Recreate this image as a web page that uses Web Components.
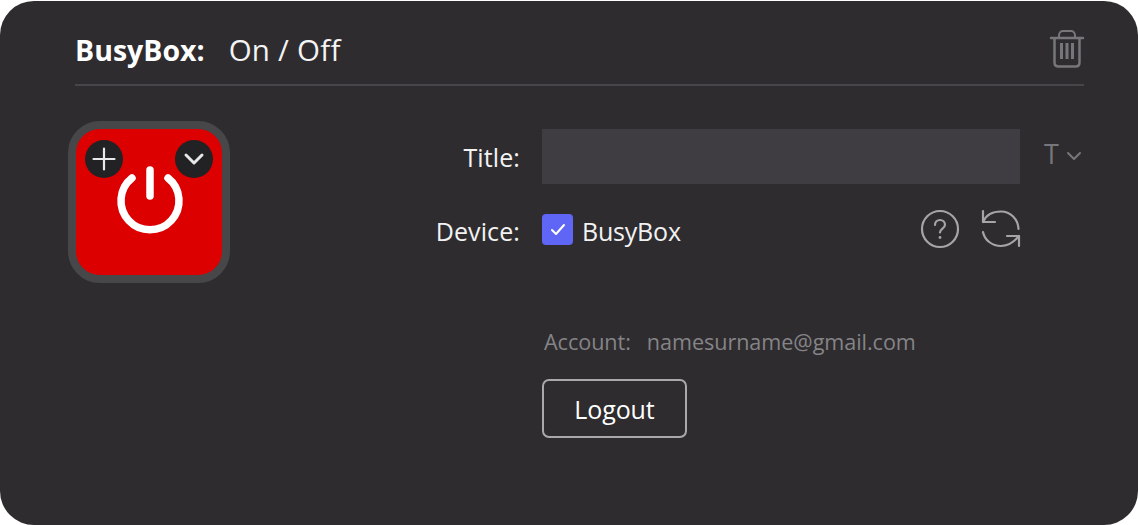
<!DOCTYPE html>
<html lang="en">
<head>
<meta charset="utf-8">
<title>BusyBox: On / Off</title>
<style>
  html, body { margin: 0; height: 100%; background: #fff; }
  body { font-family: "Open Sans", "Noto Sans", "Liberation Sans", sans-serif; color: #fff; overflow: hidden; }
</style>
</head>
<body>
<action-panel>
  <panel-header name="BusyBox:" action="On / Off"></panel-header>
  <div style="display:flex">
    <action-key></action-key>
    <settings-form></settings-form>
  </div>
</action-panel>

<script>
// Outer rounded panel
class ActionPanel extends HTMLElement {
  constructor() {
    super();
    this.attachShadow({ mode: 'open' });
    this.shadowRoot.innerHTML = `
      <style>
        :host {
          display: block;
          box-sizing: border-box;
          height: 524px;
          margin-top: 1px;
          padding: 0 54px 0 75px;
          background: #2e2c2f;
          border-radius: 34px;
        }
      </style>
      <slot></slot>
    `;
  }
}

// Title row with trash icon
class PanelHeader extends HTMLElement {
  constructor() {
    super();
    this.attachShadow({ mode: 'open' });
  }

  connectedCallback() {
    const name = this.getAttribute('name') || '';
    const action = this.getAttribute('action') || '';
    this.shadowRoot.innerHTML = `
      <style>
        :host {
          display: flex;
          align-items: center;
          height: 69px;
          padding-top: 14px;
          border-bottom: 2px solid #47454a;
        }
        b { font-size: 28.500px; font-weight: 700; margin-right: 24px; }
        span { font-size: 29.500px; letter-spacing: 0.25px; color: #f4f4f4; flex: 1; }
        svg { margin: -2px -1px 0 0; }
      </style>
      <b>${name}</b>
      <span>${action}</span>
      <svg width="36" height="38" viewBox="0 0 36 38" fill="none" stroke="#77767a" stroke-width="2" stroke-linecap="round" stroke-linejoin="round">
        <path d="M2 8h32" stroke-width="2.500"/>
        <path d="M10 8V5.500C10 2.500 12 1 14 1h8c2 0 4 1.500 4 4.500V8"/>
        <path d="M5.500 8.500v24c0 2.500 1.500 4 4 4h17c2.500 0 4-1.500 4-4v-24" stroke-width="2.500"/>
        <path d="M12.500 13v16M18 13v16M23.500 13v16" stroke-width="3" stroke-linecap="butt"/>
      </svg>
    `;
  }
}

// Red power key preview with its two round badges
class ActionKey extends HTMLElement {
  constructor() {
    super();
    this.attachShadow({ mode: 'open' });
    this.shadowRoot.innerHTML = `
      <style>
        :host {
          display: block;
          position: relative;
          flex: none;
          box-sizing: border-box;
          width: 162px;
          height: 162px;
          margin: 35px 0 0 -7px;
          background: #dc0000;
          border: 8px solid #474649;
          border-radius: 32px;
        }
        .badge {
          position: absolute;
          top: 11px;
          width: 38px;
          height: 38px;
          border-radius: 50%;
          background: #222124;
        }
        .plus { left: 9px; }
        .down { right: 9px; }
        .power { position: absolute; left: 38px; top: 34px; }
      </style>
      <svg class="power" width="72" height="72" viewBox="0 0 72 72" fill="none" stroke="#fff" stroke-width="7.500" stroke-linecap="round">
        <path d="M18 15a29 29 0 1 0 36 0"/>
        <path d="M36 7v26"/>
      </svg>
      <svg class="badge plus" viewBox="0 0 38 38" fill="none" stroke="#e8e8e8" stroke-width="2.200" stroke-linecap="round">
        <path d="M19 8.500v21M8.500 19h21"/>
      </svg>
      <svg class="badge down" viewBox="0 0 38 38" fill="none" stroke="#e8e8e8" stroke-width="3" stroke-linecap="round" stroke-linejoin="round">
        <path d="M11 15l8 8 8-8"/>
      </svg>
    `;
  }
}

// Title / device / account form
class SettingsForm extends HTMLElement {
  constructor() {
    super();
    this.attachShadow({ mode: 'open' });
    this.shadowRoot.innerHTML = `
      <style>
        :host {
          display: grid;
          flex: 1;
          grid-template-columns: 290px 478px 1fr;
          column-gap: 22px;
          align-content: start;
          margin-top: 43px;
          font-size: 25px;
          letter-spacing: 0.1px;
          color: #f2f2f2;
        }
        .label { text-align: right; align-self: center; }
        .field { height: 55px; background: #3f3d41; }
        .font {
          display: flex;
          align-items: center;
          gap: 7px;
          height: 49px;
          margin-left: 2px;
          color: #77767a;
          font-size: 27px;
        }
        .font svg { margin-top: 5px; }
        .device {
          display: flex;
          align-items: center;
          height: 38px;
          margin-top: 26px;
        }
        .device-label { padding-top: 3px; box-sizing: border-box; }
        .check {
          display: block;
          width: 31px;
          height: 31px;
          margin-right: 9px;
          border-radius: 4px;
          background: #5f66f5;
        }
        .name { flex: 1; padding-top: 3px; letter-spacing: -0.2px; }
        .tools { display: flex; align-items: center; gap: 21px; margin-right: -1px; }
        .account {
          grid-column: 2;
          margin: 79px 0 0 2px;
          font-size: 21.600px;
          letter-spacing: -0.05px;
          color: #858487;
        }
        .account span { margin-left: 16px; }
        button {
          grid-column: 2;
          justify-self: start;
          width: 145px;
          height: 59px;
          margin-top: 23px;
          padding: 0;
          font: inherit;
          letter-spacing: -0.1px;
          color: #fff;
          background: none;
          border: 2px solid #a9a8aa;
          border-radius: 7px;
        }
      </style>
      <div class="label">Title:</div>
      <div class="field"></div>
      <div class="font">T
        <svg width="16" height="10" viewBox="0 0 16 10" fill="none" stroke="#77767a" stroke-width="2" stroke-linecap="round" stroke-linejoin="round"><path d="M2 2l6 6 6-6"/></svg>
      </div>
      <div class="label device device-label" style="justify-content:flex-end">Device:</div>
      <div class="device">
        <svg class="check" viewBox="0 0 31 31" fill="none" stroke="#fff" stroke-width="2" stroke-linecap="round" stroke-linejoin="round"><path d="M10 16l4 4 8-9"/></svg>
        <span class="name">BusyBox</span>
        <div class="tools">
          <svg width="40" height="40" viewBox="0 0 40 40" fill="none" stroke="#a5a4a7" stroke-width="2.200" stroke-linecap="round">
            <circle cx="20" cy="20" r="18"/>
            <path d="M15 16c0-3 2.300-5 5-5s5 2 5 4.800c0 3.700-5 4-5 7.700"/>
            <circle cx="20" cy="28.500" r="1.400" fill="#a5a4a7" stroke="none"/>
          </svg>
          <svg width="40" height="40" viewBox="0 0 40 40" fill="none" stroke="#a5a4a7" stroke-width="2.200" stroke-linecap="round" stroke-linejoin="round">
            <path d="M2 13C5 6 12 2.500 20 2.500c9.500 0 17 7.500 17.500 17.500"/>
            <path d="M2 2v11h12"/>
            <path d="M2 23c1.500 8 9 14 18 14 8 0 13-4 18-10"/>
            <path d="M38 37V27H26"/>
          </svg>
        </div>
      </div>
      <div></div>
      <div class="account">Account:<span>namesurname@gmail.com</span></div>
      <div></div>
      <button>Logout</button>
    `;
  }
}

customElements.define('action-panel', ActionPanel);
customElements.define('panel-header', PanelHeader);
customElements.define('action-key', ActionKey);
customElements.define('settings-form', SettingsForm);
</script>
</body>
</html>
